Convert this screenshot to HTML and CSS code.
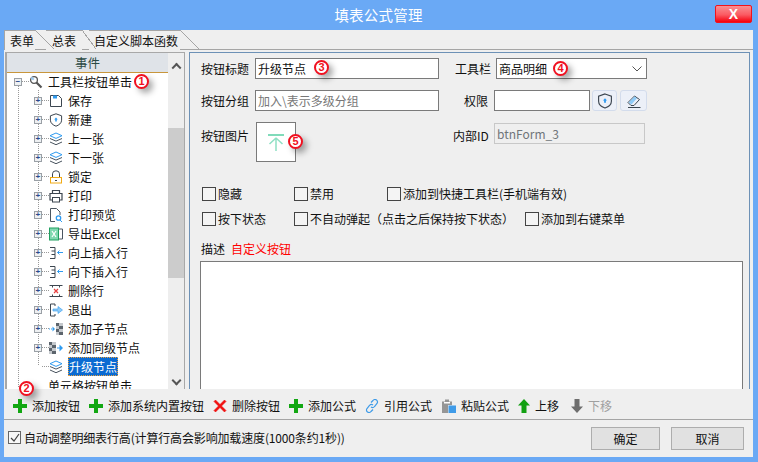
FILE: index.html
```html
<!DOCTYPE html>
<html lang="zh-CN">
<head>
<meta charset="utf-8">
<title>填表公式管理</title>
<link rel="stylesheet" href="styles.css">
</head>
<body>
<svg class="defs" width="0" height="0">
  <defs>
    <symbol id="i-save" viewBox="0 0 14 14"><path d="M1.5 1.5h8l3 3v8h-11z" fill="none" stroke="#3c4650" stroke-width="1"/><rect x="4" y="1.5" width="4" height="3" fill="#2f9bf0"/></symbol>
    <symbol id="i-shield" viewBox="0 0 14 14"><path d="M7 .8l5.600 2v4.400c0 2.900-2.600 4.900-5.600 6-3-1.100-5.600-3.100-5.600-6V2.800z" fill="none" stroke="#3c4650"/><path d="M7 4.500l1.800 2H7.800v2H6.200v-2H5.200z" fill="#2f9bf0"/></symbol>
    <symbol id="i-layers" viewBox="0 0 14 14"><path d="M7 1l6 2.700-6 2.700-6-2.700z" fill="none" stroke="#2f9bf0"/><path d="M1 6.500l6 2.600 6-2.600M1 10l6 2.700 6-2.700" fill="none" stroke="#4a5560"/></symbol>
    <symbol id="i-lock" viewBox="0 0 14 14"><path d="M3.500 7V3.800a3.500 3 0 0 1 7 0V7" fill="none" stroke="#3c4650"/><rect x="1.500" y="7.500" width="11" height="5.500" fill="none" stroke="#f2ab14"/><rect x="6" y="10" width="2" height="1" fill="#3c4650"/></symbol>
    <symbol id="i-print" viewBox="0 0 14 14"><path d="M3.500 4V1.500h7V4M3 11H1V4.500h12V11h-2" fill="none" stroke="#3c4650" stroke-width="1.200"/><rect x="3.500" y="8.500" width="7" height="4.500" fill="none" stroke="#3c4650"/></symbol>
    <symbol id="i-preview" viewBox="0 0 14 14"><path d="M6 13.500H1.500V.5h6l3.500 3.500v3" fill="none" stroke="#4a5560"/><circle cx="9.500" cy="10" r="2.200" fill="none" stroke="#2f9bf0" stroke-width="1.300"/><path d="M11 12l2 2" stroke="#2f9bf0"/></symbol>
    <symbol id="i-excel" viewBox="0 0 14 14"><rect x=".5" y="1" width="9" height="12" fill="#7fd8b0" stroke="#20a060"/><path d="M3 4l4 6M7 4l-4 6" stroke="#fff" stroke-width="1.200"/><path d="M10 2h3.500v10H10" fill="none" stroke="#4a5560"/></symbol>
    <symbol id="i-insup" viewBox="0 0 14 14"><path d="M1 1.500h5v3.500H2.500M6 5v3.500H2.500M6 8.500v4H1" fill="none" stroke="#3c4650"/><path d="M14 6.500H8.500M10.500 4.500l-2 2 2 2" fill="none" stroke="#2f9bf0"/></symbol>
    <symbol id="i-del" viewBox="0 0 14 14"><path d="M.5 1.500h13M.5 12.500h13M3.500 1.500v2M10.500 1.500v2M3.500 12.500v-2M10.500 12.500v-2" fill="none" stroke="#3c4650"/><path d="M5 5l4 4M9 5l-4 4" stroke="#e84040" stroke-width="1.200"/></symbol>
    <symbol id="i-exit" viewBox="0 0 14 14"><path d="M6 1H1.500v12H6" fill="none" stroke="#3c4650"/><path d="M6 1v2M6 13v-2" stroke="#3c4650"/><path d="M4 6h5V3.500L13.500 7 9 10.500V8H4z" fill="#8fcbf7" stroke="#2f9bf0" stroke-width=".6"/></symbol>
    <symbol id="i-child" viewBox="0 0 14 14"><path d="M0 7h4" stroke="#2f9bf0" stroke-dasharray="1 1"/><path d="M3.500 4.500L6 7l-2.500 2.500z" fill="#2f9bf0"/><path d="M7 1h7v12H7z" fill="#c4c8cc"/><path d="M7 1h3v3H7zM10 4h4v3h-4zM7 7h3v3H7zM10 10h4v3h-4z" fill="#5c646c"/></symbol>
    <symbol id="i-sib" viewBox="0 0 14 14"><path d="M0 1h7v12H0z" fill="#c4c8cc"/><path d="M0 1h3v3H0zM3 4h4v3H3zM0 7h3v3H0zM3 10h4v3H3z" fill="#5c646c"/><path d="M8 7h3" stroke="#2f9bf0"/><path d="M10.500 3.500L14 7l-3.500 3.500z" fill="#2f9bf0"/></symbol>
    <symbol id="i-eraser" viewBox="0 0 16 16"><path d="M2 9.500L8.500 3l5 3.500L8 12.500H5z" fill="none" stroke="#3c4650"/><path d="M2.500 9.500L8.500 3.500l2.500 1.800L5.500 11.500z" fill="#8fcbf7"/><path d="M2 14.500h12.500" stroke="#3c4650"/></symbol>
    <symbol id="i-plus" viewBox="0 0 14 14"><path d="M5 0h4v5h5v4H9v5H5V9H0V5h5z" fill="#12a712"/></symbol>
    <symbol id="i-x" viewBox="0 0 14 14"><path d="M1 2.500L2.500 1 7 5.500 11.500 1 13 2.500 8.500 7 13 11.500 11.500 13 7 8.500 2.500 13 1 11.500 5.500 7z" fill="#f01010" stroke="#f01010" stroke-width=".6"/></symbol>
    <symbol id="i-link" viewBox="0 0 14 14"><path d="M6 3.500l2-2a2.500 2.500 0 0 1 4 3l-2.500 3a2.500 2.500 0 0 1-3.500.500M8 10.500l-2 2a2.500 2.500 0 0 1-4-3l2.500-3a2.500 2.500 0 0 1 3.500-.500" fill="none" stroke="#3f9be8" stroke-width="1.200"/></symbol>
    <symbol id="i-paste" viewBox="0 0 14 14"><path d="M0 2.500h3V.5h4v2h3V6H6v8H0z" fill="#969696"/><rect x="2" y="3" width="6" height="1.500" fill="#fff"/><path d="M6.500 6.500H14V14H6.500z" fill="#3f9be8"/></symbol>
    <symbol id="i-up" viewBox="0 0 12 14"><path d="M6 0l6 6.500H8.500V14h-5V6.500H0z" fill="#12a012"/></symbol>
    <symbol id="i-down" viewBox="0 0 12 14"><path d="M3.500 0h5v7.500H12L6 14 0 7.500h3.500z" fill="#6e6e6e"/></symbol>
    <symbol id="i-tools" viewBox="0 0 14 14"><circle cx="5" cy="5" r="3.400" fill="none" stroke="#555" stroke-width="1.300"/><path d="M7.500 7.500l5 5" stroke="#555" stroke-width="2.200"/><path d="M3 1.500L5.500 4 4 5.500 1.500 3" fill="#9cc9ee"/></symbol>
    <symbol id="i-top" viewBox="0 0 20 20"><path d="M2 3h16" stroke="#3cc795" stroke-width="1.300"/><path d="M10 5.500V19M10 6L3.500 12M10 6l6.500 6" fill="none" stroke="#8fe0c4" stroke-width="1.500"/></symbol>
  </defs>
</svg>

<div class="window">
  <header class="titlebar">
    <span class="title">填表公式管理</span>
    <button class="close" type="button">X</button>
  </header>

  <main class="client">
    <nav class="tabs">
      <span class="tab tab-first">表单</span>
      <span class="tab tab-second">总表</span>
      <span class="tab tab-third">自定义脚本函数</span>
    </nav>

    <section class="body">
      <aside class="tree-panel">
        <div class="tree-main">
          <div class="tree-head">事件</div>
          <ul class="tree">
            <li class="node root"><i class="exp">−</i><i class="dots short"></i><svg class="ico"><use href="#i-tools"/></svg><span class="lbl">工具栏按钮单击</span></li>
            <li class="node"><i class="exp">+</i><i class="dots"></i><svg class="ico"><use href="#i-save"/></svg><span class="lbl">保存</span></li>
            <li class="node"><i class="exp">+</i><i class="dots"></i><svg class="ico"><use href="#i-shield"/></svg><span class="lbl">新建</span></li>
            <li class="node"><i class="exp">+</i><i class="dots"></i><svg class="ico"><use href="#i-layers"/></svg><span class="lbl">上一张</span></li>
            <li class="node"><i class="exp">+</i><i class="dots"></i><svg class="ico"><use href="#i-layers"/></svg><span class="lbl">下一张</span></li>
            <li class="node"><i class="exp">+</i><i class="dots"></i><svg class="ico"><use href="#i-lock"/></svg><span class="lbl">锁定</span></li>
            <li class="node"><i class="exp">+</i><i class="dots"></i><svg class="ico"><use href="#i-print"/></svg><span class="lbl">打印</span></li>
            <li class="node"><i class="exp">+</i><i class="dots"></i><svg class="ico"><use href="#i-preview"/></svg><span class="lbl">打印预览</span></li>
            <li class="node"><i class="exp">+</i><i class="dots"></i><svg class="ico"><use href="#i-excel"/></svg><span class="lbl">导出Excel</span></li>
            <li class="node"><i class="exp">+</i><i class="dots"></i><svg class="ico"><use href="#i-insup"/></svg><span class="lbl">向上插入行</span></li>
            <li class="node"><i class="exp">+</i><i class="dots"></i><svg class="ico"><use href="#i-insup"/></svg><span class="lbl">向下插入行</span></li>
            <li class="node"><i class="exp">+</i><i class="dots"></i><svg class="ico"><use href="#i-del"/></svg><span class="lbl">删除行</span></li>
            <li class="node"><i class="exp">+</i><i class="dots"></i><svg class="ico"><use href="#i-exit"/></svg><span class="lbl">退出</span></li>
            <li class="node"><i class="exp">+</i><i class="dots"></i><svg class="ico"><use href="#i-child"/></svg><span class="lbl">添加子节点</span></li>
            <li class="node"><i class="exp">+</i><i class="dots"></i><svg class="ico"><use href="#i-sib"/></svg><span class="lbl">添加同级节点</span></li>
            <li class="node leaf"><i class="exp none"></i><i class="dots"></i><svg class="ico"><use href="#i-layers"/></svg><span class="lbl selected">升级节点</span></li>
            <li class="node root"><i class="exp none"></i><i class="dots short"></i><span class="ico none"></span><span class="lbl">单元格按钮单击</span></li>
          </ul>
        </div>
        <div class="scrollbar">
          <span class="arrow up"></span>
          <span class="thumb"></span>
          <span class="arrow down"></span>
        </div>
      </aside>

      <section class="form-panel">
        <div class="row row-a">
          <label class="fl">按钮标题</label>
          <div class="inp w-title">升级节点</div>
          <label class="fl l-bar">工具栏</label>
          <div class="inp w-select">商品明细<svg class="chev" width="10" height="6" viewBox="0 0 10 6"><path d="M.5.500L5 5 9.500.500" fill="none" stroke="#555"/></svg></div>
        </div>
        <div class="row row-b">
          <label class="fl">按钮分组</label>
          <div class="inp w-title ph">加入\表示多级分组</div>
          <label class="fl l-perm">权限</label>
          <div class="inp w-perm"></div>
          <span class="icon-btn"><svg width="16" height="16"><use href="#i-shield"/></svg></span>
          <span class="icon-btn b2"><svg width="16" height="16"><use href="#i-eraser"/></svg></span>
        </div>
        <div class="row row-c">
          <label class="fl l-img">按钮图片</label>
          <div class="pic"><svg width="20" height="20"><use href="#i-top"/></svg></div>
          <label class="fl l-id">内部ID</label>
          <div class="inp w-id">btnForm_3</div>
        </div>
        <div class="checks">
          <label class="ck c1"><i class="box"></i>隐藏</label>
          <label class="ck c2"><i class="box"></i>禁用</label>
          <label class="ck"><i class="box"></i>添加到快捷工具栏(手机端有效)</label>
        </div>
        <div class="checks second">
          <label class="ck c1"><i class="box"></i>按下状态</label>
          <label class="ck c2b"><i class="box"></i>不自动弹起（点击之后保持按下状态）</label>
          <label class="ck"><i class="box"></i>添加到右键菜单</label>
        </div>
        <div class="desc-label">描述<span class="red">自定义按钮</span></div>
        <div class="desc"></div>
      </section>
    </section>

    <div class="toolbar">
      <span class="tool"><svg width="14" height="14"><use href="#i-plus"/></svg>添加按钮</span>
      <span class="tool"><svg width="14" height="14"><use href="#i-plus"/></svg>添加系统内置按钮</span>
      <span class="tool"><svg width="14" height="14"><use href="#i-x"/></svg>删除按钮</span>
      <span class="tool"><svg width="14" height="14"><use href="#i-plus"/></svg>添加公式</span>
      <span class="tool"><svg width="14" height="14"><use href="#i-link"/></svg>引用公式</span>
      <span class="tool t-paste"><svg width="14" height="14"><use href="#i-paste"/></svg>粘贴公式</span>
      <span class="tool"><svg width="12" height="14"><use href="#i-up"/></svg>上移</span>
      <span class="tool off"><svg width="12" height="14"><use href="#i-down"/></svg>下移</span>
    </div>

    <footer class="footer">
      <label class="auto"><i class="box on"><svg width="12" height="12" viewBox="0 0 12 12"><path d="M2 6l3 3 5-7" fill="none" stroke="#444" stroke-width="1.200"/></svg></i>自动调整明细表行高(计算行高会影响加载速度(1000条约1秒))</label>
      <button class="btn b-ok" type="button">确定</button>
      <button class="btn b-no" type="button">取消</button>
    </footer>
  </main>

  <span class="badge n1">1</span>
  <span class="badge n2">2</span>
  <span class="badge n3">3</span>
  <span class="badge n4">4</span>
  <span class="badge n5">5</span>
</div>
</body>
</html>
```

FILE: styles.css
```css
* { box-sizing: border-box; }
html, body { margin: 0; padding: 0; }
body {
  width: 758px; height: 462px; overflow: hidden;
  font: 12px/16px "Noto Sans CJK SC", "Liberation Sans", sans-serif;
  color: #111; background: #6aa9f5;
}
.defs { position: absolute; }
.window { position: relative; width: 758px; height: 462px; display: flex; flex-direction: column; padding: 0 5px 5px 4px; }

.titlebar { height: 30px; flex: none; display: flex; align-items: flex-start; position: relative; justify-content: center; }
.title { color: #fff; font-size: 14.500px; line-height: 30px; letter-spacing: .2px; }
.close {
  position: absolute; right: 1px; top: 5px; width: 37px; height: 18px; padding: 0;
  border: 1px solid #f0131c; border-radius: 2px; color: #fff; font: bold 14px/14px "Liberation Sans", sans-serif;
  background: linear-gradient(#f98f92, #fb5a62 55%, #f5000c);
}

.client { flex: 1; min-height: 0; background: #efefef; display: flex; flex-direction: column; }

.tabs { height: 20px; flex: none; display: flex; border-bottom: 1px solid #a5a5a5; position: relative; }
.tab { position: relative; height: 20px; line-height: 20px; font-size: 12px; border-top: 1px solid #a5a5a5; background: #efefef; white-space: nowrap; }
.tab::after {
  content: ""; position: absolute; top: -1px; left: 100%; width: 19px; height: 19px;
  background: linear-gradient(to top right, #efefef 48%, #a5a5a5 48%, #a5a5a5 52%, transparent 52%);
}
.tab-first { width: 31px; border-left: 1px solid #a5a5a5; z-index: 3; padding-left: 5px; }
.tab-second { width: 36px; margin-left: 11px; padding-left: 6px; z-index: 2; }
.tab-second::after { width: 14px; }
.tab-third { width: 91px; margin-left: 7px; padding-left: 5px; z-index: 1; }

.body { height: 339px; flex: none; display: flex; padding: 2px 3px 0 1px; gap: 4px; }

.tree-panel { width: 180px; border: 1px solid #a8a8a8; border-left-width: 2px; border-bottom: 0; display: flex; overflow: hidden; position: relative; background: #fff; }
.tree-main { flex: 1; min-width: 0; display: flex; flex-direction: column; overflow: hidden; }
.tree-head { height: 20px; flex: none; background: #dfe3e8; border-bottom: 1px solid #c8963c; text-align: center; line-height: 19px; color: #2c4a44; font-size: 12.500px; }
.tree { list-style: none; margin: -1px 0 0; padding: 0; position: relative; }
.tree::before { content: ""; position: absolute; left: 11px; top: 10px; height: 305px; border-left: 1px dotted #999; }
.tree::after { content: ""; position: absolute; left: 31px; top: 18px; height: 275px; border-left: 1px dotted #999; }
.node { height: 19px; display: flex; align-items: center; padding-left: 27px; position: relative; white-space: nowrap; }
.node.root { padding-left: 7px; }
.exp { width: 8px; height: 8px; flex: none; border: 1px solid #9aa0a6; background: #eef0f2; font: bold 8px/6px "Liberation Mono", monospace; text-align: center; color: #2a4a8c; position: relative; z-index: 1; }
.exp.none { border: 0; background: none; }
.dots { width: 7px; flex: none; border-top: 1px dotted #999; }
.dots.short { width: 7px; }
.ico { width: 14px; height: 14px; flex: none; display: block; }
.lbl { margin-left: 5px; line-height: 19px; }
.selected { background: #0b6bd2; color: #fff; outline: 1px dotted #e8a040; outline-offset: -1px; padding: 0 1px; margin-left: 5px; }

.scrollbar { width: 16px; flex: none; background: #eee; position: relative; display: flex; flex-direction: column; align-items: center; }
.thumb { width: 16px; height: 150px; background: #ccc; margin-top: 53px; flex: none; }
.arrow { width: 8px; height: 8px; flex: none; }
.arrow.up { margin-top: 7px; border-left: 2px solid #555; border-top: 2px solid #555; transform: rotate(45deg) translate(3px, 3px); width: 7px; height: 7px; margin-bottom: 8px; }
.arrow.down { margin-top: 99px; border-right: 2px solid #555; border-bottom: 2px solid #555; transform: rotate(45deg); width: 7px; height: 7px; }

.form-panel { flex: 1; min-width: 0; border: 1px solid #6d91b6; border-bottom: 0; padding: 5px 6px 0 11px; overflow: hidden; }
.row { display: flex; align-items: center; }
.row-a { height: 21px; }
.row-b { height: 21px; margin-top: 11px; }
.row-c { height: 40px; margin-top: 11px; align-items: flex-start; }
.fl { width: 54px; flex: none; line-height: 21px; }
.inp { height: 21px; border: 1px solid #7a7a7a; background: #fff; line-height: 19px; padding-left: 2px; position: relative; flex: none; }
.w-title { width: 184px; }
.l-bar { width: 41px; margin-left: 16px; }
.w-select { width: 151px; }
.chev { position: absolute; right: 4px; top: 7px; }
.ph { color: #777; }
.l-perm { width: 30px; margin-left: 25px; }
.w-perm { width: 96px; }
.icon-btn { width: 25px; height: 21px; margin-left: 2px; border: 1px solid #d3dcec; border-radius: 3px; background: #ecf0f8; display: flex; align-items: center; justify-content: center; flex: none; }
.b2 { width: 27px; margin-left: 3px; }
.l-img { line-height: 28px; }
.pic { width: 40px; height: 40px; border: 1px solid #7a7a7a; background: #fff; margin-left: 1px; flex: none; display: flex; align-items: center; justify-content: center; }
.l-id { width: 42px; margin-left: 157px; line-height: 27px; }
.w-id { width: 151px; margin-top: 1px; margin-left: -1px; border-color: #c8c8c8; background: #efefef; color: #70757a; padding-left: 2px; }

.checks { display: flex; margin-top: 24px; height: 16px; }
.checks.second { margin-top: 9px; }
.ck { display: flex; align-items: center; gap: 2px; white-space: nowrap; margin-left: 1px; }
.box { width: 14px; height: 14px; flex: none; border: 1px solid #444; background: #f4f4f4; display: block; }
.box.on { width: 13px; height: 13px; border-color: #666; background: #f8f8f8; }
.box.on svg { display: block; }
.c1 { width: 91px; }
.c2 { width: 92px; }
.c2b { width: 230px; }

.desc-label { margin-top: 14px; line-height: 16px; height: 16px; }
.red { color: #f00; margin-left: 6px; }
.desc { margin: 4px 0 0 -1px; height: 140px; border: 1px solid #7a7a7a; background: #fff; }

.toolbar { height: 31px; flex: none; display: flex; align-items: center; padding: 4px 0 0 9px; gap: 9px; border-bottom: 1px solid #a5a5a5; }
.tool { display: flex; align-items: center; gap: 5px; white-space: nowrap; }
.tool svg { flex: none; }
.t-paste { margin-left: 1px; }
.off { color: #a0a0a0; margin-left: 3px; }

.footer { flex: 1; display: flex; align-items: center; padding: 0 9px 0 4px; }
.auto { display: flex; align-items: center; gap: 3px; flex: 1; white-space: nowrap; letter-spacing: -.15px; margin-bottom: 2px; }
.btn { width: 69px; height: 23px; padding: 0; border: 1px solid #adadad; background: #e1e1e1; font: 12px/20px "Noto Sans CJK SC", sans-serif; color: #111; }
.b-no { width: 73px; margin-left: 11px; }

.badge {
  position: absolute; width: 15px; height: 15px; border-radius: 50%; border: 2px solid #f01020; background: #fff;
  color: #f01020; font: bold 11px/11px "Liberation Sans", sans-serif; text-align: center;
  box-shadow: 4px 4px 6px rgba(0,0,0,.35);
}
.n1 { left: 134px; top: 74px; }
.n2 { left: 19px; top: 381px; }
.n3 { left: 314px; top: 60px; }
.n4 { left: 553px; top: 61px; }
.n5 { left: 288px; top: 134px; }
```
